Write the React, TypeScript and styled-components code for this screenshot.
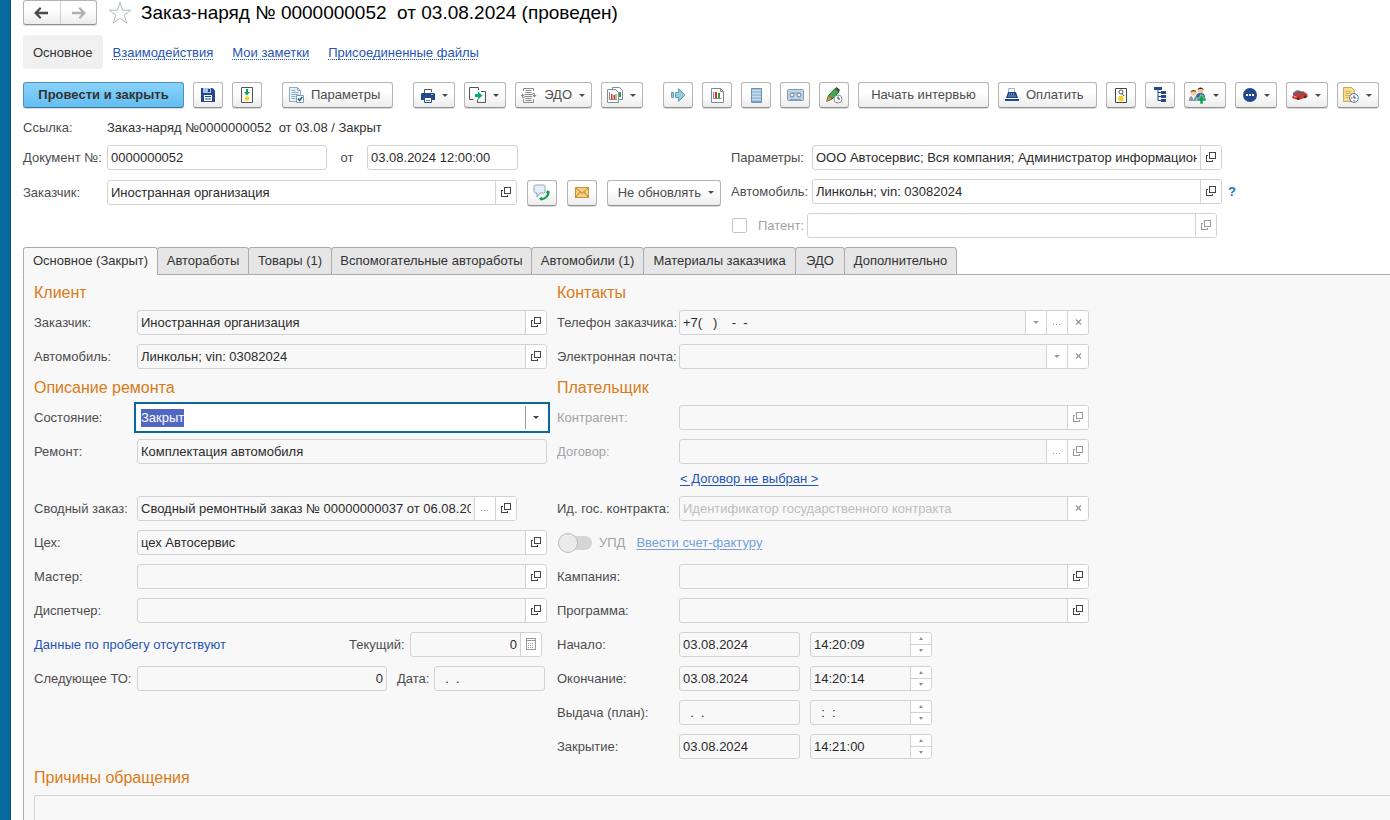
import React, { useEffect, useRef } from 'react';
import styled, { createGlobalStyle, css } from 'styled-components';

const GlobalStyle = createGlobalStyle`
  *, *::before, *::after { box-sizing: border-box; }
  body {
    margin: 0;
    background: #fff;
    color: #4d4d4d;
    font: 13px/18px "Liberation Sans", Arial, sans-serif;
  }
  button, input, textarea { font: inherit; color: inherit; margin: 0; }
  svg { display: block; flex: none; }
`;

const Page = styled.div`
  display: flex;
  height: 100vh;
  overflow: hidden;
`;

const Stripe = styled.div`
  flex: none;
  width: 11px;
  background: #07699f;
  border-right: 1px solid #045482;
`;

const Main = styled.main`
  flex: 1;
  min-width: 0;
  display: flex;
  flex-direction: column;
  padding-left: 12px;
`;

const raised = css`
  background: linear-gradient(#fff 40%, #ececec);
  border: 1px solid #b4b4b4;
  border-bottom-color: #8f8f8f;
  border-radius: 3px;
  box-shadow: 0 1px 0 #dcdcdc;
`;

const TitleRow = styled.header`
  display: flex;
  align-items: center;
  height: 25px;
`;

const History = styled.div`
  ${raised}
  display: flex;
  width: 74px;
  height: 25px;
`;

const HistoryButton = styled.button`
  flex: 1;
  display: flex;
  align-items: center;
  justify-content: center;
  padding: 0;
  border: 0;
  background: none;
  & + & { border-left: 1px solid #d0d0d0; }
`;

const StarButton = styled.button`
  padding: 0;
  margin: 0 9px 0 11px;
  border: 0;
  background: none;
`;

const Title = styled.h1`
  margin: 0;
  font-size: 19px;
  line-height: 24px;
  font-weight: 400;
  color: #000;
  white-space: pre;
`;

const SectionNav = styled.nav`
  display: flex;
  gap: 19px;
  margin: 10px 0 13px;
  height: 34px;
  line-height: 36px;
`;

const CurrentSection = styled.span`
  padding: 0 10px;
  margin-right: -9px;
  border-radius: 4px;
  background: #f0f0f0;
  color: #333;
`;

const SectionLink = styled.a`
  color: #1f55b5;
  text-decoration: underline dotted 1px;
  text-underline-offset: 2px;
  text-decoration-skip-ink: none;
`;

const Toolbar = styled.div`
  display: flex;
  gap: 20px;
  height: 27px;
`;

const ToolGroup = styled.div`
  display: flex;
  gap: 9px;
`;

const Button = styled.button<{ $width?: number; $primary?: boolean; $align?: 'start' | 'end' }>`
  ${raised}
  flex: none;
  display: flex;
  align-items: center;
  justify-content: ${p => (p.$align ? `flex-${p.$align}` : 'center')};
  gap: 7px;
  height: 26px;
  width: ${p => p.$width ?? 30}px;
  padding: 0 ${p => (p.$align ? 6 : 0)}px;
  white-space: nowrap;
  ${p => p.$primary && css`
    background: linear-gradient(#8ad3fb, #62bdf0);
    border-color: #4a91bb;
    border-bottom-color: #3d7597;
    color: #333;
    font-weight: 700;
  `}
`;

const Form = styled.section`
  display: flex;
  flex-direction: column;
  gap: 9px;
  margin: 11px 0 9px;
`;

const FormColumns = styled.div`
  display: flex;
  gap: 10px;
`;

const Column = styled.div<{ $width: number }>`
  flex: 0 1 ${p => p.$width}px;
  min-width: 0;
  display: flex;
  flex-direction: column;
  gap: 9px;
`;

const Row = styled.div<{ $height?: number; $gap?: number; $spaced?: boolean }>`
  display: flex;
  align-items: center;
  height: ${p => p.$height ?? 25}px;
  gap: ${p => p.$gap ?? 0}px;
  margin-top: ${p => (p.$spaced ? 23 : 0)}px;
`;

const CustomerRow = styled(Row)`
  flex: 0 1 494px;
  min-width: 0;
`;

const Label = styled.label<{ $width?: number; $muted?: boolean; $center?: boolean }>`
  flex: none;
  width: ${p => (p.$width ? `${p.$width}px` : 'auto')};
  text-align: ${p => (p.$center ? 'center' : 'left')};
  color: ${p => (p.$muted ? '#a3a3a3' : '#4d4d4d')};
  white-space: nowrap;
`;

const Reference = styled.output`
  color: #333;
  white-space: pre;
`;

const FieldBox = styled.div<{ $width: number; $shade?: boolean; $focused?: boolean }>`
  flex: 0 1 ${p => p.$width}px;
  min-width: 0;
  display: flex;
  height: 25px;
  overflow: hidden;
  border: 1px solid #d2d2d2;
  border-radius: 3px;
  background: ${p => (p.$shade ? '#f8f8f8' : '#fff')};
  ${p => p.$focused && css`
    border-color: #fff;
    border-radius: 0;
    background: #fff;
    box-shadow: 0 0 0 1px #fff, 0 0 0 3px #07699f;
  `}
`;

const TextInput = styled.input<{ $right?: boolean }>`
  flex: 1;
  min-width: 0;
  width: 0;
  padding: 0 3px;
  border: 0;
  outline: 0;
  background: none;
  color: #2b2b2b;
  text-align: ${p => (p.$right ? 'right' : 'left')};
  &::placeholder { color: #bdbdbd; opacity: 1; }
  &::selection { background: #4f68c3; color: #fff; }
`;

const Addon = styled.button<{ $muted?: boolean; $strong?: boolean }>`
  flex: none;
  display: flex;
  align-items: center;
  justify-content: center;
  width: 21px;
  padding: 0 0 1px;
  border: 0;
  border-left: 1px solid ${p => (p.$strong ? '#999' : '#d2d2d2')};
  background: #fff;
  color: ${p => (p.$muted ? '#9a9a9a' : '#444')};
`;

const Spinner = styled.div`
  flex: none;
  display: flex;
  flex-direction: column;
  width: 21px;
  border-left: 1px solid #d2d2d2;
  background: #fff;
`;

const SpinButton = styled.button`
  flex: 1;
  display: flex;
  align-items: center;
  justify-content: center;
  padding: 0;
  border: 0;
  background: none;
  color: #8d8d8d;
  & + & { border-top: 1px solid #d2d2d2; }
`;

const CheckBox = styled.input`
  appearance: none;
  flex: none;
  width: 15px;
  height: 15px;
  margin: 0 11px 0 1px;
  border: 1px solid #c4c4c4;
  border-radius: 2px;
  background: #fff;
`;

const HelpButton = styled.button`
  padding: 0;
  margin-left: 6px;
  border: 0;
  background: none;
  color: #0f77bf;
  font-weight: 700;
`;

const Tabs = styled.div`
  display: flex;
  flex: none;
  height: 28px;
  margin-bottom: -1px;
  z-index: 1;
`;

const Tab = styled.button<{ $active?: boolean; $width: number }>`
  width: ${p => p.$width}px;
  padding: 0 0 1px;
  border: 1px solid #acacac;
  border-bottom-color: ${p => (p.$active ? '#f8f8f8' : '#acacac')};
  border-radius: 3px 3px 0 0;
  background: ${p => (p.$active ? '#f8f8f8' : '#e6e6e6')};
  color: #333;
  white-space: nowrap;
  & + & { margin-left: -1px; }
`;

const Panel = styled.section`
  flex: 1;
  min-height: 0;
  display: flex;
  flex-direction: column;
  gap: 9px;
  padding: 8px 0 0 10px;
  border: solid #acacac;
  border-width: 1px 0 0 1px;
  background: #f8f8f8;
`;

const Heading = styled.h2`
  margin: 0;
  height: 18px;
  font-size: 16px;
  line-height: 20px;
  font-weight: 400;
  color: #d97b17;
`;

const Link = styled.a<{ $muted?: boolean; $plain?: boolean }>`
  color: ${p => (p.$muted ? '#76a0dc' : '#1f55b5')};
  text-decoration: ${p => (p.$plain ? 'none' : 'underline')};
  text-underline-offset: 2px;
  white-space: nowrap;
`;

const ContractRow = styled.div`
  display: flex;
  align-items: center;
  height: 14px;
  padding: 0 0 2px 123px;
`;

const MileageRow = styled(Row)`
  padding-right: 5px;
  & > a { flex: 1; }
`;

const Switch = styled.input`
  appearance: none;
  position: relative;
  width: 34px;
  height: 14px;
  margin: 0 7px 0 1px;
  border-radius: 7px;
  background: #d5d5d5;
  &::before {
    content: "";
    position: absolute;
    left: 0;
    top: -3px;
    width: 20px;
    height: 20px;
    border: 1px solid #bcbcbc;
    border-radius: 50%;
    background: #ebebeb;
  }
`;

const UpdLabel = styled(Label)`
  margin-right: 11px;
`;

const DateGap = styled.span`
  flex: none;
  width: 10px;
`;

const Reasons = styled.textarea`
  flex: 1;
  min-height: 0;
  padding: 3px;
  border: solid #d2d2d2;
  border-width: 1px 0 0 1px;
  border-radius: 3px 0 0 0;
  outline: 0;
  resize: none;
  background: #f8f8f8;
`;

/* ---------- glyphs ---------- */

const Caret = () => (
  <svg width="6" height="3" viewBox="0 0 6 3"><path d="M0 0h6L3 3z" fill="currentColor" /></svg>
);

const OpenGlyph = () => (
  <svg width="10" height="10" viewBox="0 0 10 10" fill="none" stroke="currentColor" shapeRendering="crispEdges">
    <path d="M3.5.5h6v6h-6z" />
    <path d="M2 3.5H.5v6h6V8" />
  </svg>
);

const DotsGlyph = () => (
  <svg width="8" height="6" viewBox="0 0 8 6" fill="currentColor" shapeRendering="crispEdges">
    <path d="M0 5h1v1H0zM3 5h1v1H3zM6 5h1v1H6z" />
  </svg>
);

const CrossGlyph = () => (
  <svg width="7" height="6" viewBox="0 0 7 6" stroke="currentColor" strokeWidth="1.4"><path d="M1 .5l5 5M6 .5l-5 5" /></svg>
);

const CalcGlyph = () => (
  <svg width="10" height="12" viewBox="0 0 10 12" fill="none" stroke="currentColor" shapeRendering="crispEdges">
    <path d="M.5.5h9v11h-9zM.5 2.5h9" />
    <path d="M2 5.5h6M2 7.5h6M2 9.5h6" strokeDasharray="1 1" />
  </svg>
);

const UpGlyph = () => (
  <svg width="4" height="3" viewBox="0 0 4 3"><path d="M2 0l2 3H0z" fill="currentColor" /></svg>
);

const DownGlyph = () => (
  <svg width="4" height="3" viewBox="0 0 4 3"><path d="M2 3l2-3H0z" fill="currentColor" /></svg>
);

const BackIcon = () => (
  <svg width="15" height="12" viewBox="0 0 15 12"><path d="M6 0L0 6l6 6 1.400-1.400L4.500 7.200H14V4.800H4.500L7.400 1.800z" fill="#4a4a4a" /></svg>
);

const ForwardIcon = () => (
  <svg width="15" height="12" viewBox="0 0 15 12"><path d="M9 0l6 6-6 6-1.400-1.400 2.900-3.400H1V4.800h9.500L7.600 1.800z" fill="#b0b0b0" /></svg>
);

const StarIcon = () => (
  <svg width="24" height="24" viewBox="0 0 24 24">
    <path d="M12 1.500l2.600 7.700h8.100l-6.500 4.900 2.500 8-6.700-4.900-6.700 4.900 2.500-8-6.500-4.900h8.100z" fill="none" stroke="#b3bac1" />
  </svg>
);

const SaveIcon = () => (
  <svg width="14" height="14" viewBox="0 0 14 14">
    <path d="M0 0h11.500L14 2.500V14H0z" fill="#24488f" />
    <path d="M2 0h8v5H2z" fill="#a9c3e3" />
    <path d="M7 1h2v3H7z" fill="#24488f" />
    <path d="M3 7h8v6H3z" fill="#fff" />
    <path d="M4 8.500h6M4 11h6" stroke="#24488f" />
  </svg>
);

const PostIcon = () => (
  <svg width="12" height="16" viewBox="0 0 12 16">
    <path d="M.5.5h11v15H.5z" fill="#fff" stroke="#555" />
    <path d="M5 2h2v3h2L6 8.500 3 5h2z" fill="#00a85a" />
    <circle cx="6" cy="11.500" r="2.200" fill="#fdd017" />
  </svg>
);

const SettingsIcon = () => (
  <svg width="15" height="16" viewBox="0 0 15 16">
    <path d="M.5.5h8l3 3v11H.5z" fill="#e8f1f7" stroke="#8fabc0" />
    <path d="M8.500.5v3h3" fill="none" stroke="#8fabc0" />
    <path d="M2.500 3.500h4M2.500 5.500h7M2.500 7.500h7M2.500 9.500h4M2.500 11.500h4" stroke="#8fabc0" />
    <path d="M7.500 8.500h7v7h-7z" fill="#fff" stroke="#7d9cb5" />
    <path d="M9 11.500l1.600 2L13.200 10" fill="none" stroke="#1f5c94" strokeWidth="1.600" />
  </svg>
);

const PrintIcon = () => (
  <svg width="14" height="15" viewBox="0 0 14 15">
    <path d="M3.500 5V1.500h7V4" fill="#fff" stroke="#555" />
    <path d="M1 5h12l1 1v6H0V6z" fill="#24488f" />
    <path d="M10 6.500h2" stroke="#9fb8dd" />
    <path d="M3.500 9.500h7v5h-7z" fill="#fff" stroke="#24488f" />
    <path d="M5 12.500h4" stroke="#777" />
  </svg>
);

const CreateFromIcon = () => (
  <svg width="17" height="17" viewBox="0 0 17 17" fill="none">
    <path d="M9.500 3V.5h-9v12h4M12 4.500h4.500v11h-8v-3" stroke="#555" />
    <path d="M6 7h3V4.500l4.500 4L9 12.500V10H6z" fill="#00b368" />
  </svg>
);

const ExchangeIcon = () => (
  <svg width="16" height="15" viewBox="0 0 16 15" fill="none" stroke="#8b8b8b">
    <path d="M2.500 3V.5h10V3M2.500 11v3.500h10V11M4.500 2.500h6M4.500 4.500h6M3.500 6.500h8M3.500 8.500h8M4.500 10.500h6M4.500 12.500h6" />
    <path d="M11.500 5.500h2v2M3.500 9.500h-2v-2" />
    <path d="M11.500 7h4l-2 2.500zM-.5 8h4l-2-2.500z" fill="#8b8b8b" stroke="none" />
  </svg>
);

const ReportsIcon = () => (
  <svg width="16" height="16" viewBox="0 0 16 16">
    <path d="M5.500.5h7l3 3v9h-10z" fill="#fff" stroke="#7d8fa0" />
    <path d="M13 5v5" stroke="#3a9a3a" strokeWidth="2" />
    <path d="M.5 2.500h8l3 3v10H.5z" fill="#fff" stroke="#7d8fa0" />
    <path d="M2.500 5v7.500h7.500" fill="none" stroke="#888" />
    <path d="M4 7h1.500v5H4z" fill="#e0302a" />
    <path d="M6.500 8H8v4H6.500z" fill="#e0302a" />
    <path d="M8.500 7h1v5h-1z" fill="#3a9a3a" />
  </svg>
);

const MoveIcon = () => (
  <svg width="15" height="14" viewBox="0 0 15 14" fill="#93cdd0" stroke="#659cc7">
    <path d="M.5 4.500h2v5h-2zM4.500 4.500h3v-4L14 7l-6.500 6.500v-4h-3z" />
  </svg>
);

const ChartIcon = () => (
  <svg width="13" height="15" viewBox="0 0 13 15">
    <path d="M.5.500h9l3 3v11H.5z" fill="#fff" stroke="#7a8a99" />
    <path d="M9.500.500v3h3" fill="none" stroke="#7a8a99" />
    <path d="M2.500 4v6.500h8" fill="none" stroke="#888" />
    <path d="M4 4h2v6H4z" fill="#e8281f" />
    <path d="M7 5h2v5H7z" fill="#1fa63a" />
  </svg>
);

const ListIcon = () => (
  <svg width="11" height="15" viewBox="0 0 11 15">
    <path d="M.5.5h10v14H.5z" fill="#7fa6c6" stroke="#6b90b0" />
    <path d="M1 2.500h9M1 5.500h9M1 8.500h9M1 11.500h9" stroke="#c4dced" strokeWidth="2" />
  </svg>
);

const TapeIcon = () => (
  <svg width="17" height="12" viewBox="0 0 17 12" fill="none" stroke="#7d9dbb">
    <rect x=".5" y=".5" width="16" height="11" rx="1" fill="#b9d6ec" />
    <circle cx="5" cy="6" r="2" fill="#f2f2f2" stroke="#777" />
    <circle cx="12" cy="6" r="2" fill="#f2f2f2" stroke="#777" />
    <path d="M5 4h7M3 10.500h11" />
  </svg>
);

const PencilClockIcon = () => (
  <svg width="17" height="17" viewBox="0 0 17 17">
    <path d="M1 14l1.500-5.500L9 1.500l4 3.500-7 7z" fill="#45a845" stroke="#2f6e33" />
    <path d="M9 1.500L10.500 0 14 3l-1 2z" fill="#444" />
    <path d="M.5 14.500l2-5.500L6 12z" fill="#d99a52" stroke="#8a5a2b" strokeWidth=".6" />
    <circle cx="12" cy="12" r="4" fill="#fff" stroke="#7c93a8" />
    <path d="M12 9.500V12h2" fill="none" stroke="#333" />
  </svg>
);

const CashIcon = () => (
  <svg width="14" height="14" viewBox="0 0 14 14">
    <path d="M3.500 5V.5h6V5" fill="#fff" stroke="#8fbade" />
    <path d="M3 4h8l2 6H1z" fill="#24488f" />
    <path d="M4 6h6M3.500 8h7" stroke="#c0d2ec" strokeDasharray="1 1" />
    <path d="M0 11h14v2H0z" fill="#24488f" />
  </svg>
);

const PreviewIcon = () => (
  <svg width="12" height="15" viewBox="0 0 12 15">
    <path d="M.5.5h11v14H.5z" fill="#fff" stroke="#444" />
    <circle cx="6" cy="4" r="2" fill="none" stroke="#555" />
    <path d="M7 5.500L9 8" stroke="#555" />
    <circle cx="6" cy="10.500" r="2.700" fill="#fdd017" />
  </svg>
);

const TreeIcon = () => (
  <svg width="13" height="16" viewBox="0 0 13 16">
    <path d="M0 0h8v3H0zM7 4h5v3H7zM7 8h5v3H7zM7 12h5v3H7z" fill="#24488f" />
    <path d="M4 2v11.500h3M4 5.500h3M4 9.500h3" fill="none" stroke="#24488f" />
  </svg>
);

const PeopleIcon = () => (
  <svg width="17" height="17" viewBox="0 0 17 17">
    <path d="M7 11c0-4 1.500-5 4.500-5S16 7 16 11z" fill="#3d5f96" />
    <circle cx="11.500" cy="3.500" r="2.700" fill="#f0c79c" />
    <path d="M8.500 3.500C8.500-.5 14.500-.5 14.500 3.500L13 2h-3z" fill="#4a2a1a" />
    <path d="M0 14c0-4 1.500-5 4.500-5S9 10 9 14z" fill="#7f97a8" />
    <path d="M3 9h3l-1.500 4z" fill="#fff" />
    <circle cx="4.500" cy="6" r="2.700" fill="#f3cda2" />
    <path d="M1.500 6c0-4.500 6-4.500 6 0L6 4.500H3z" fill="#8a4b1f" />
    <path d="M11 8h3v3h3v3h-3v3h-3v-3H8v-3h3z" fill="#12a150" stroke="#fff" strokeWidth=".5" />
  </svg>
);

const MoreIcon = () => (
  <svg width="14" height="14" viewBox="0 0 14 14">
    <circle cx="7" cy="7" r="7" fill="#24488f" />
    <path d="M3 6h2v2H3zM6 6h2v2H6zM9 6h2v2H9z" fill="#fff" />
  </svg>
);

const CarIcon = () => (
  <svg width="16" height="12" viewBox="0 0 17 12">
    <path d="M1 3.500L5 1l4 .5 2 2-6 3-4-.5z" fill="#5c6f90" />
    <path d="M0 8l2.500-2.500L6 2.800l6-.8 3 2.200 1.500 1.300V8L14 9l-7 2.200-6-1.500z" fill="#d6322c" />
    <path d="M6 5l1.500-1.800 4-.4L13.500 5 7 6z" fill="#54657a" />
    <path d="M2 7.500l3 .8" stroke="#f3b0a8" />
    <circle cx="6.500" cy="9.800" r="1.400" fill="#333" />
    <circle cx="14" cy="8" r="1.400" fill="#333" />
  </svg>
);

const NoteClockIcon = () => (
  <svg width="16" height="16" viewBox="0 0 16 16">
    <path d="M.5.5h8l3 3v11H.5z" fill="#f4dc8f" stroke="#c9a856" />
    <path d="M2.500 4.500h5M2.500 6.500h6M2.500 8.500h4M2.500 10.500h3" stroke="#cfae60" />
    <circle cx="11" cy="11" r="4.300" fill="#fff" stroke="#4878b0" />
    <path d="M11 8.500V11h2" fill="none" stroke="#244a80" />
    <path d="M8 11h1.500M11 14.500V13" stroke="#d33" />
  </svg>
);

const CallIcon = () => (
  <svg width="18" height="17" viewBox="0 0 18 17">
    <path d="M2.500 1h8q1.500 0 1.500 1.500v5Q12 9 10.500 9H7l-3 4V9H2.500Q1 9 1 7.500v-5Q1 1 2.500 1z" fill="#e3eef7" stroke="#8aa4bd" />
    <path d="M14 6.500l2.500.5c1 4-3 9-8.500 9.500l-2-2 2.500-1.500 1.500 1c2-.7 3.500-2.500 4-4.500l-1-1z" fill="#0fa04d" />
  </svg>
);

const MailIcon = () => (
  <svg width="14" height="11" viewBox="0 0 14 11">
    <path d="M.5.5h13v10H.5z" fill="#f7cf7c" stroke="#c9923a" />
    <path d="M.5.5L7 6.500 13.500.5M.5 10.500L5 5M13.500 10.500L9 5" fill="none" stroke="#b9802c" />
  </svg>
);

/* ---------- composed parts ---------- */

type AddonKind = 'open' | 'dots' | 'clear' | 'list' | 'calc';

const addonGlyph: Record<AddonKind, { title: string; glyph: React.ReactNode }> = {
  open: { title: 'Открыть', glyph: <OpenGlyph /> },
  dots: { title: 'Выбрать', glyph: <DotsGlyph /> },
  clear: { title: 'Очистить', glyph: <CrossGlyph /> },
  list: { title: 'Список', glyph: <Caret /> },
  calc: { title: 'Калькулятор', glyph: <CalcGlyph /> },
};

interface FieldProps {
  id: string;
  value?: string;
  width?: number;
  shade?: boolean;
  right?: boolean;
  muted?: boolean;
  placeholder?: string;
  addons?: AddonKind[];
  spin?: boolean;
  label?: string;
}

const Field = ({ id, value = '', width = 410, shade, right, muted, placeholder, addons = [], spin, label }: FieldProps) => (
  <FieldBox $width={width} $shade={shade}>
    <TextInput id={id} defaultValue={value} placeholder={placeholder} $right={right} aria-label={label} />
    {addons.map(kind => (
      <Addon key={kind} type="button" aria-label={addonGlyph[kind].title} $muted={muted || kind !== 'open'}>
        {addonGlyph[kind].glyph}
      </Addon>
    ))}
    {spin && (
      <Spinner>
        <SpinButton type="button" aria-label="Больше"><UpGlyph /></SpinButton>
        <SpinButton type="button" aria-label="Меньше"><DownGlyph /></SpinButton>
      </Spinner>
    )}
  </FieldBox>
);

const LEFT_LABEL = 103;
const RIGHT_LABEL = 122;

const LabeledRow = ({ text, labelWidth, spaced, mutedLabel, ...field }: FieldProps & {
  text: string; labelWidth: number; spaced?: boolean; mutedLabel?: boolean;
}) => (
  <Row $spaced={spaced}>
    <Label htmlFor={field.id} $width={labelWidth} $muted={mutedLabel}>{text}</Label>
    <Field shade {...field} />
  </Row>
);

const StateField = () => {
  const ref = useRef<HTMLInputElement>(null);
  useEffect(() => {
    ref.current?.focus();
    ref.current?.select();
  }, []);
  return (
    <Row>
      <Label htmlFor="state" $width={LEFT_LABEL}>Состояние:</Label>
      <FieldBox $width={410} $focused>
        <TextInput id="state" ref={ref} role="combobox" aria-expanded={false} defaultValue="Закрыт" />
        <Addon type="button" aria-label="Список" $strong><Caret /></Addon>
      </FieldBox>
    </Row>
  );
};

const DateTimeRow = ({ id, text, date, time }: { id: string; text: string; date: string; time: string }) => (
  <Row>
    <Label htmlFor={id} $width={RIGHT_LABEL}>{text}</Label>
    <Field id={id} shade width={121} value={date} />
    <DateGap />
    <Field id={`${id}-time`} shade width={122} value={time} spin label={`${text} время`} />
  </Row>
);

const MenuButton = ({ label, width = 42, icon, text }: { label: string; width?: number; icon?: React.ReactNode; text?: string }) => (
  <Button type="button" aria-label={label} $width={width} $align="end">
    {icon}
    {text}
    <Caret />
  </Button>
);

const tabs: [string, number][] = [
  ['Основное (Закрыт)', 135],
  ['Автоработы', 92],
  ['Товары (1)', 84],
  ['Вспомогательные автоработы', 201],
  ['Автомобили (1)', 113],
  ['Материалы заказчика', 153],
  ['ЭДО', 50],
  ['Дополнительно', 113],
];

export default function App() {
  return (
    <Page>
      <GlobalStyle />
      <Stripe />
      <Main>
        <TitleRow>
          <History>
            <HistoryButton type="button" aria-label="Назад"><BackIcon /></HistoryButton>
            <HistoryButton type="button" aria-label="Вперед"><ForwardIcon /></HistoryButton>
          </History>
          <StarButton type="button" aria-label="В избранное"><StarIcon /></StarButton>
          <Title>{'Заказ-наряд № 0000000052  от 03.08.2024 (проведен)'}</Title>
        </TitleRow>

        <SectionNav>
          <CurrentSection>Основное</CurrentSection>
          <SectionLink href="#interactions">Взаимодействия</SectionLink>
          <SectionLink href="#notes">Мои заметки</SectionLink>
          <SectionLink href="#files">Присоединенные файлы</SectionLink>
        </SectionNav>

        <Toolbar>
          <ToolGroup>
            <Button type="button" $primary $width={161}>Провести и закрыть</Button>
            <Button type="button" aria-label="Записать"><SaveIcon /></Button>
            <Button type="button" aria-label="Провести"><PostIcon /></Button>
          </ToolGroup>
          <ToolGroup>
            <Button type="button" $width={111} $align="start"><SettingsIcon />Параметры</Button>
          </ToolGroup>
          <ToolGroup>
            <MenuButton label="Печать" icon={<PrintIcon />} />
            <MenuButton label="Создать на основании" icon={<CreateFromIcon />} />
            <MenuButton label="ЭДО" width={77} icon={<ExchangeIcon />} text="ЭДО" />
            <MenuButton label="Отчеты" icon={<ReportsIcon />} />
          </ToolGroup>
          <ToolGroup>
            <Button type="button" aria-label="Переместить"><MoveIcon /></Button>
            <Button type="button" aria-label="Движения"><ChartIcon /></Button>
            <Button type="button" aria-label="Реестр"><ListIcon /></Button>
            <Button type="button" aria-label="Запись"><TapeIcon /></Button>
            <Button type="button" aria-label="История изменений"><PencilClockIcon /></Button>
            <Button type="button" $width={131}>Начать интервью</Button>
            <Button type="button" $width={99} $align="start"><CashIcon />Оплатить</Button>
            <Button type="button" aria-label="Просмотр"><PreviewIcon /></Button>
            <Button type="button" aria-label="Структура"><TreeIcon /></Button>
            <MenuButton label="Исполнители" icon={<PeopleIcon />} />
            <MenuButton label="Сообщения" icon={<MoreIcon />} />
            <MenuButton label="Автомобиль" icon={<CarIcon />} />
            <MenuButton label="Напоминания" icon={<NoteClockIcon />} />
          </ToolGroup>
        </Toolbar>

        <Form>
          <Row $height={16}>
            <Label htmlFor="reference" $width={84}>Ссылка:</Label>
            <Reference id="reference">{'Заказ-наряд №0000000052  от 03.08 / Закрыт'}</Reference>
          </Row>
          <FormColumns>
            <Column $width={698}>
              <Row>
                <Label htmlFor="number" $width={84}>Документ №:</Label>
                <Field id="number" width={220} value="0000000052" />
                <Label htmlFor="date" $width={40} $center>от</Label>
                <Field id="date" width={151} value="03.08.2024 12:00:00" />
              </Row>
              <Row $height={27} $gap={10}>
                <CustomerRow>
                  <Label htmlFor="customer-top" $width={84}>Заказчик:</Label>
                  <Field id="customer-top" value="Иностранная организация" addons={['open']} />
                </CustomerRow>
                <Button type="button" aria-label="Позвонить"><CallIcon /></Button>
                <Button type="button" aria-label="Написать письмо"><MailIcon /></Button>
                <MenuButton label="Не обновлять" width={114} text="Не обновлять" />
              </Row>
            </Column>
            <Column $width={520}>
              <Row>
                <Label htmlFor="params" $width={81}>Параметры:</Label>
                <Field id="params" value="ООО Автосервис; Вся компания; Администратор информационной базы" addons={['open']} />
              </Row>
              <Row>
                <Label htmlFor="car-top" $width={81}>Автомобиль:</Label>
                <Field id="car-top" value="Линкольн; vin: 03082024" addons={['open']} />
                <HelpButton type="button">?</HelpButton>
              </Row>
              <Row>
                <CheckBox type="checkbox" id="patent-on" />
                <Label htmlFor="patent-on" $width={49} $muted>Патент:</Label>
                <Field id="patent" addons={['open']} muted label="Патент" />
              </Row>
            </Column>
          </FormColumns>
        </Form>

        <Tabs role="tablist">
          {tabs.map(([name, width], i) => (
            <Tab key={name} type="button" role="tab" aria-selected={i === 0} $active={i === 0} $width={width}>{name}</Tab>
          ))}
        </Tabs>

        <Panel>
          <FormColumns>
            <Column $width={513}>
              <Heading>Клиент</Heading>
              <LabeledRow id="customer" text="Заказчик:" labelWidth={LEFT_LABEL} value="Иностранная организация" addons={['open']} />
              <LabeledRow id="car" text="Автомобиль:" labelWidth={LEFT_LABEL} value="Линкольн; vin: 03082024" addons={['open']} />
              <Heading>Описание ремонта</Heading>
              <StateField />
              <LabeledRow id="repair" text="Ремонт:" labelWidth={LEFT_LABEL} value="Комплектация автомобиля" />
              <LabeledRow id="order" spaced text="Сводный заказ:" labelWidth={LEFT_LABEL} width={380} value="Сводный ремонтный заказ № 00000000037 от 06.08.2024" addons={['dots', 'open']} />
              <LabeledRow id="shop" text="Цех:" labelWidth={LEFT_LABEL} value="цех Автосервис" addons={['open']} />
              <LabeledRow id="master" text="Мастер:" labelWidth={LEFT_LABEL} addons={['open']} />
              <LabeledRow id="dispatcher" text="Диспетчер:" labelWidth={LEFT_LABEL} addons={['open']} />
              <MileageRow>
                <Link href="#mileage" $plain>Данные по пробегу отсутствуют</Link>
                <Label htmlFor="mileage" $width={61}>Текущий:</Label>
                <Field id="mileage" shade width={132} right value="0" addons={['calc']} />
              </MileageRow>
              <Row>
                <Label htmlFor="next-service" $width={LEFT_LABEL}>Следующее ТО:</Label>
                <Field id="next-service" shade width={250} right value="0" />
                <DateGap />
                <Label htmlFor="next-date" $width={37}>Дата:</Label>
                <Field id="next-date" shade width={111} value="  .  ." />
              </Row>
            </Column>
            <Column $width={532}>
              <Heading>Контакты</Heading>
              <LabeledRow id="phone" text="Телефон заказчика:" labelWidth={RIGHT_LABEL} value="+7(   )    -  -" addons={['list', 'dots', 'clear']} />
              <LabeledRow id="email" text="Электронная почта:" labelWidth={RIGHT_LABEL} addons={['list', 'clear']} />
              <Heading>Плательщик</Heading>
              <LabeledRow id="payer" text="Контрагент:" labelWidth={RIGHT_LABEL} mutedLabel muted addons={['open']} />
              <LabeledRow id="contract" text="Договор:" labelWidth={RIGHT_LABEL} mutedLabel muted addons={['dots', 'open']} />
              <ContractRow><Link href="#contract">&lt; Договор не выбран &gt;</Link></ContractRow>
              <LabeledRow id="gov-id" text="Ид. гос. контракта:" labelWidth={RIGHT_LABEL} placeholder="Идентификатор государственного контракта" addons={['clear']} />
              <Row>
                <Switch type="checkbox" role="switch" id="upd" />
                <UpdLabel htmlFor="upd" $muted>УПД</UpdLabel>
                <Link href="#invoice" $muted>Ввести счет-фактуру</Link>
              </Row>
              <LabeledRow id="campaign" text="Кампания:" labelWidth={RIGHT_LABEL} addons={['open']} />
              <LabeledRow id="program" text="Программа:" labelWidth={RIGHT_LABEL} addons={['open']} />
              <DateTimeRow id="start" text="Начало:" date="03.08.2024" time="14:20:09" />
              <DateTimeRow id="end" text="Окончание:" date="03.08.2024" time="14:20:14" />
              <DateTimeRow id="issue" text="Выдача (план):" date="  .  ." time="  :  :" />
              <DateTimeRow id="close" text="Закрытие:" date="03.08.2024" time="14:21:00" />
            </Column>
          </FormColumns>
          <Heading id="reasons-title">Причины обращения</Heading>
          <Reasons aria-labelledby="reasons-title" />
        </Panel>
      </Main>
    </Page>
  );
}
